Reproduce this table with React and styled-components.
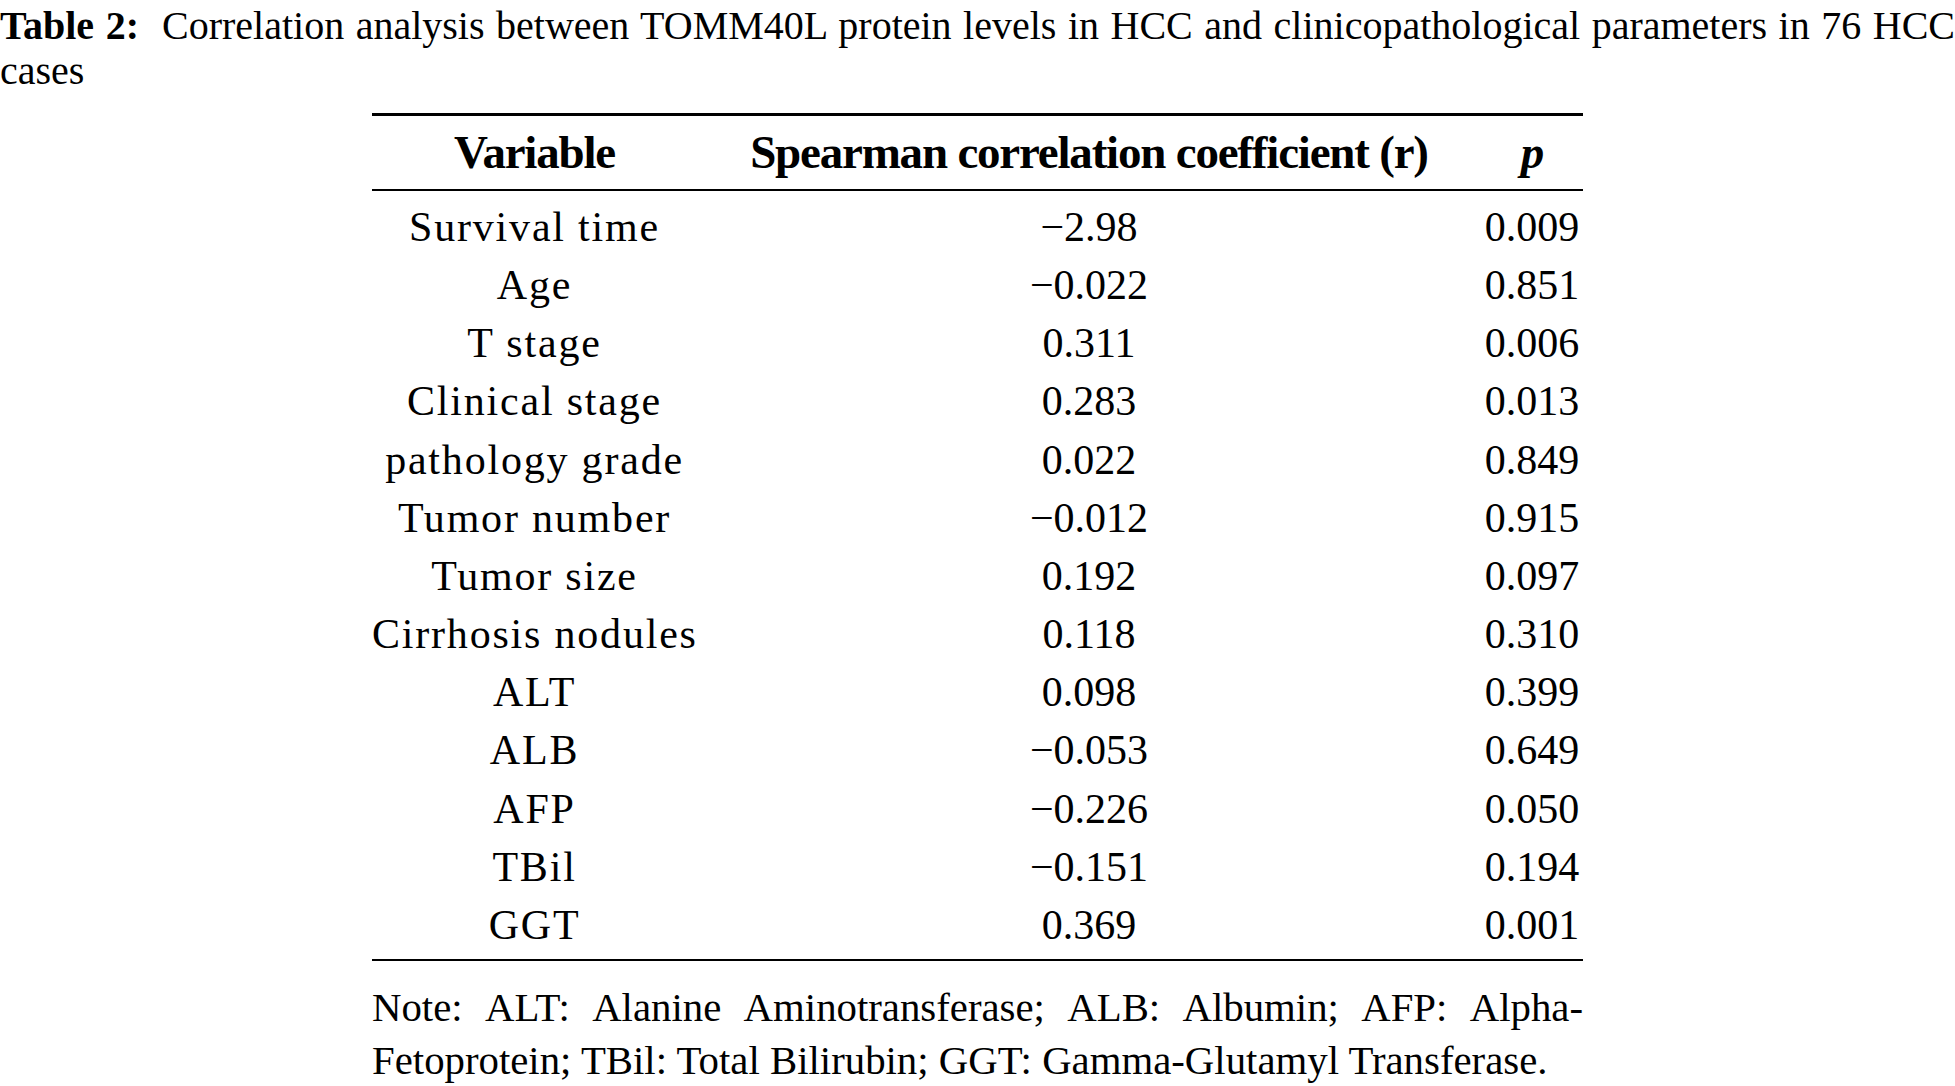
import React from "react";
import styled, { createGlobalStyle } from "styled-components";

const GlobalStyle = createGlobalStyle`
  html, body {
    margin: 0;
    padding: 0;
    background: #ffffff;
  }
  body {
    font-family: "Liberation Serif", "Times New Roman", serif;
    color: #000000;
  }
`;

const Page = styled.div`
  width: 1955px;
  min-height: 1086px;
  overflow: hidden;
`;

const Caption = styled.p`
  margin: 0;
  padding-top: 3px;
  width: 1955px;
  font-size: 40px;
  line-height: 45px;
  text-align: justify;
`;

const CaptionLabel = styled.b`
  font-weight: 700;
`;

const TableBlock = styled.div`
  width: 1211px;
  margin: 20px auto 0 auto;
`;

const GridRow = styled.div`
  display: grid;
  grid-template-columns: 325px 681px 102px;
  column-gap: 51.5px;
`;

const HeaderRow = styled(GridRow)`
  border-top: 3px solid #000;
  border-bottom: 2px solid #000;
  padding-top: 4px;
  height: 68.5px;
  box-sizing: content-box;
`;

const HeadCell = styled.div`
  text-align: center;
  font-size: 47px;
  line-height: 64.5px;
  font-weight: 700;
  letter-spacing: -1.2px;
  white-space: nowrap;
  font-style: ${(p) => (p.$italic ? "italic" : "normal")};
`;

const Body = styled.div`
  padding-top: 7.5px;
  padding-bottom: 5px;
  border-bottom: 2px solid #000;
`;

const Row = styled(GridRow)`
  height: 58.17px;
`;

const Cell = styled.div`
  text-align: center;
  font-size: 42px;
  line-height: 58.17px;
  white-space: nowrap;
  letter-spacing: ${(p) => (p.$label ? "1.8px" : "0")};
`;

const Note = styled.p`
  margin: 19.5px 0 0 0;
  font-size: 40.8px;
  line-height: 53px;
  text-align: justify;
`;

const rows = [
  ["Survival time", "\u22122.98", "0.009"],
  ["Age", "\u22120.022", "0.851"],
  ["T stage", "0.311", "0.006"],
  ["Clinical stage", "0.283", "0.013"],
  ["pathology grade", "0.022", "0.849"],
  ["Tumor number", "\u22120.012", "0.915"],
  ["Tumor size", "0.192", "0.097"],
  ["Cirrhosis nodules", "0.118", "0.310"],
  ["ALT", "0.098", "0.399"],
  ["ALB", "\u22120.053", "0.649"],
  ["AFP", "\u22120.226", "0.050"],
  ["TBil", "\u22120.151", "0.194"],
  ["GGT", "0.369", "0.001"],
];

export default function App() {
  return (
    <Page>
      <GlobalStyle />
      <Caption>
        <CaptionLabel>Table 2:</CaptionLabel>{"\u00a0 "}Correlation analysis
        between TOMM40L protein levels in HCC and clinicopathological
        parameters in 76 HCC cases
      </Caption>
      <TableBlock>
        <HeaderRow>
          <HeadCell>Variable</HeadCell>
          <HeadCell>Spearman correlation coefficient (r)</HeadCell>
          <HeadCell $italic>p</HeadCell>
        </HeaderRow>
        <Body>
          {rows.map(([name, r, p]) => (
            <Row key={name}>
              <Cell $label>{name}</Cell>
              <Cell>{r}</Cell>
              <Cell>{p}</Cell>
            </Row>
          ))}
        </Body>
        <Note>
          Note: ALT: Alanine Aminotransferase; ALB: Albumin; AFP:
          Alpha-Fetoprotein; TBil: Total Bilirubin; GGT: Gamma-Glutamyl
          Transferase.
        </Note>
      </TableBlock>
    </Page>
  );
}
